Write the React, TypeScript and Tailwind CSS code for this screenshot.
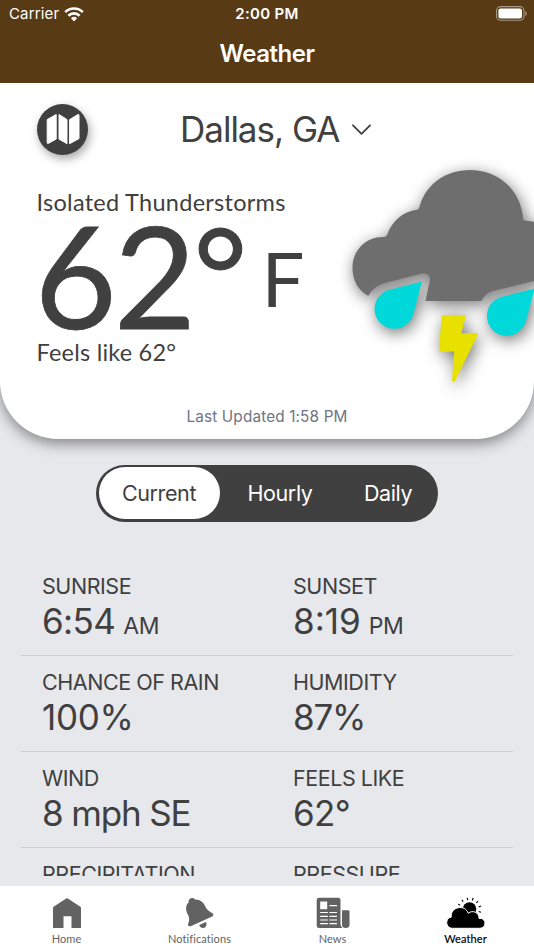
import { useState } from 'react';

const stats = [
  [
    { label: 'SUNRISE', value: '6:54', unit: 'AM', tracking: 'tracking-[-0.6px]' },
    { label: 'SUNSET', value: '8:19', unit: 'PM', tracking: 'tracking-[0px]' },
  ],
  [
    { label: 'CHANCE OF RAIN', value: '100%', tracking: 'tracking-[-0.3px]' },
    { label: 'HUMIDITY', value: '87%', tracking: 'tracking-[-1.2px]' },
  ],
  [
    { label: 'WIND', value: '8 mph SE', tracking: 'tracking-[-1.15px]' },
    { label: 'FEELS LIKE', value: '62°', tracking: 'tracking-[-0.6px]' },
  ],
  [
    { label: 'PRECIPITATION', value: '0.1 in', tracking: 'tracking-[-0.6px]' },
    { label: 'PRESSURE', value: '30.0 in', tracking: 'tracking-[-0.6px]' },
  ],
];

const ranges = [
  { name: 'Current', width: 'w-[121px]' },
  { name: 'Hourly', width: 'w-[121px]' },
  { name: 'Daily', width: 'w-[95px]' },
];

function WifiIcon() {
  return (
    <svg width="20" height="15" viewBox="0 0 20 15" fill="none" stroke="white" strokeWidth="2.6">
      <path d="M1.2 5.1a12.6 12.6 0 0 1 17.6 0" />
      <path d="M4.4 8.7a8 8 0 0 1 11.2 0" />
      <path d="M10 14.4 6.9 11.3a4.5 4.5 0 0 1 6.2 0z" fill="white" stroke="none" />
    </svg>
  );
}

function BatteryIcon() {
  return (
    <svg width="31" height="15" viewBox="0 0 31 15">
      <rect x="0.6" y="0.6" width="27.4" height="13.6" rx="4" fill="none" stroke="#a8998a" strokeWidth="1.1" />
      <rect x="2.4" y="2.4" width="23.6" height="10" rx="2.2" fill="white" />
      <path d="M29.3 5v5c1.9-.8 1.9-4.2 0-5z" fill="#a8998a" />
    </svg>
  );
}

function MapIcon() {
  return (
    <svg width="34" height="32" viewBox="0 0 34 32" fill="white" stroke="white" strokeWidth="1" strokeLinejoin="round">
      <path d="M1.2 6.6 10.2 1.5v24.6l-8 4.3q-1 .3-1-.8z" />
      <path d="M13 1.5 21 6.6v24.1l-8-4.6z" />
      <path d="M23.6 6.6 32 1.5q1-.3 1 .8v23.3l-9.4 5.1z" />
    </svg>
  );
}

function StormIcon() {
  return (
    <svg
      className="absolute right-0 top-[75px] overflow-visible [filter:drop-shadow(2px_4px_8px_rgba(0,0,0,0.55))]"
      width="194"
      height="240"
      viewBox="340 158 194 240"
    >
      <path
        fill="#6e6e6e"
        d="M367.5 295.5C358 290 352.5 280 352.5 268C352.5 250 366 237 383 237Q386 237.5 387.3 234.5C392 221 403 211.5 417 209.8Q419 209.5 419.8 206C426 184 446 170 470 170C498 170 521 190 523 218Q523 220.6 526 220.8C550 222 566 240 566 260V273L534 281L491 291.5Q485 294 481.3 301H425.5L430 280Q430 272.5 423 273.2L383 283.5Q373 287 368.8 295.5z"
      />
      <path fill="#00d8d9" d="M422 281.5 388.5 290A19.8 19.8 0 1 0 413.6 313.5z" />
      <path fill="#00d8d9" d="M534.8 288.5 501 297A19.8 19.8 0 1 0 526 320.5z" />
      <path
        fill="#e8e100"
        stroke="#e8e100"
        strokeWidth="1.6"
        strokeLinejoin="round"
        d="M442.5 316h22.4l-4.6 18.2 17-.5-23 47.2h-1.500l2.3-30.5-15.4.9z"
      />
    </svg>
  );
}

function HomeIcon() {
  return (
    <svg width="30" height="32" viewBox="0 0 30 32" fill="#626262">
      <path d="M15 1 28.4 9.8q.6.4.6 1.2v19.2q0 .9-.9.9H19.5V19.3h-8v11.8H1.9q-.9 0-.9-.9V11q0-.8.6-1.2z" />
    </svg>
  );
}

function BellIcon() {
  return (
    <svg width="30" height="32" viewBox="0 0 30 32" fill="#626262">
      <path d="M3.7 5.3C2.6 1 8.3-.6 10.2 2.6C15.5 2.6 18.6 5.5 20.3 9.5C21.7 13 24.5 14.5 27.6 16.2Q29.2 18.2 27.2 19.5L5.7 29.2Q3 29.6 2.9 27.4C4.6 23.5 4.7 21 2.6 17C.2 12.6.7 8 3.7 5.3z" />
      <path d="M14.2 28 20.8 25.1A3.7 3.7 0 1 1 14.2 28z" />
    </svg>
  );
}

function NewsIcon() {
  return (
    <svg width="34" height="32" viewBox="0 0 34 32">
      <path fill="#626262" d="M3 .7h19.3q2.2 0 2.2 2.2V27q0 2.6 2 4H3Q.7 31 .7 28.5V3Q.7.7 3 .7z" />
      <path fill="#626262" d="M26 13.2h6.3q1.2 0 1.2 1.2V28q0 3-3.7 3T26 28z" />
      <rect x="4.2" y="4.5" width="7" height="7.7" fill="white" />
      <path
        stroke="white"
        strokeWidth="1.2"
        d="M13.5 8.6h7.5M4.2 15.5h7.7M13.4 15.5h7.6M4.2 19.3h7.7M13.4 19.3h7.6M4.2 23h7.7M13.4 23h7.6M4.2 26.7h7.7M13.4 26.7h7.6"
      />
    </svg>
  );
}

function WeatherIcon() {
  return (
    <svg width="40" height="32" viewBox="0 0 40 32">
      <circle cx="23.5" cy="12" r="6.8" />
      <path stroke="black" strokeWidth="1.1" d="M21.8 3.2 21.1.8M26.3 3.5l.8-2.5M30.3 6l1.8-2M32.6 10l2.5-1M32.7 14.5l2.3.7M17.2 4.7 15.9 2.7M14.2 8.3l-2-1.2" />
      <path
        stroke="white"
        strokeWidth="1"
        d="M6.5 31.3C-1 31.3-.9 20.7 5.2 20.2C4.2 9.5 19.5 7 22.2 16.3C26.6 12.5 33 15.5 33 21.4C40.7 20.6 41 31.3 33.5 31.3z"
      />
    </svg>
  );
}

const tabs = [
  { name: 'Home', icon: HomeIcon },
  { name: 'Notifications', icon: BellIcon },
  { name: 'News', icon: NewsIcon },
  { name: 'Weather', icon: WeatherIcon },
];

export default function App() {
  const [range, setRange] = useState('Current');

  return (
    <div className="flex h-[950px] w-[534px] flex-col overflow-hidden bg-[#e7e8ec] font-['Inter',sans-serif] text-[#404040]">
      <header className="relative z-20 h-[83px] shrink-0 bg-[#583a15] text-white">
        <div className="grid h-[28px] grid-cols-3 items-center pl-[9px] pr-[7px]">
          <div className="flex items-center gap-[5px] text-[15px] tracking-[0.15px]">
            Carrier
            <WifiIcon />
          </div>
          <div className="pr-[2px] text-center text-[15px] font-semibold tracking-[0.3px]">2:00 PM</div>
          <div className="flex justify-end pb-[2px]">
            <BatteryIcon />
          </div>
        </div>
        <h1 className="pt-2 text-center text-[24px] font-semibold leading-9 tracking-[-0.5px]">Weather</h1>
      </header>

      <section className="relative z-10 h-[355.5px] shrink-0 rounded-b-[58px] bg-white shadow-[0_5px_14px_rgba(0,0,0,0.42)]">
        <div className="flex h-[92px] items-center pl-[37px]">
          <button className="flex size-[51px] items-center justify-center rounded-full bg-[#404040] shadow-[2px_4px_10px_rgba(0,0,0,0.35)]">
            <MapIcon />
          </button>
          <button className="ml-[92px] flex items-center gap-[13px] whitespace-nowrap text-[35px] tracking-[-1px]">
            Dallas, GA
            <svg width="19" height="11" viewBox="0 0 19 11" fill="none" stroke="#404040" strokeWidth="1.8" strokeLinecap="round" strokeLinejoin="round">
              <path d="M1 1.3 9.5 9.8 18 1.3" />
            </svg>
          </button>
        </div>
        <div className="whitespace-nowrap pl-[36.5px] pt-[13px] font-['Lato',sans-serif]">
          <p className="text-[23.5px] leading-[28px] tracking-[0.28px]">Isolated Thunderstorms</p>
          <div className="-ml-[2px] flex h-[122px] items-start">
            <span className="text-[142px] leading-[116px] tracking-[-3px] [-webkit-text-stroke:0.8px_#404040]">62</span>
            <span className="text-[131px] leading-[113px] [-webkit-text-stroke:1px_#404040]">°</span>
            <span className="ml-[14px] text-[76px] leading-[124px]">F</span>
          </div>
          <p className="text-[23.5px] leading-[28px] tracking-[0.22px]">Feels like 62°</p>
        </div>
        <p className="pt-[39px] text-center text-[15.3px] leading-[24px] tracking-[0.15px] text-[#6f7585]">Last Updated 1:58 PM</p>
        <StormIcon />
      </section>

      <div className="mt-[26px] flex h-[57px] w-[342px] shrink-0 self-center rounded-full bg-[#404040] p-[2.5px]">
        {ranges.map((r) => (
          <button
            key={r.name}
            onClick={() => setRange(r.name)}
            className={`${r.width} shrink-0 rounded-full text-[21.5px] tracking-[-0.4px] ${
              range === r.name ? 'bg-white text-[#404040]' : 'text-white'
            }`}
          >
            {r.name}
          </button>
        ))}
      </div>

      <main className="mx-[21px] mt-[38.5px] h-[316px] shrink-0 overflow-hidden">
        {stats.map((row) => (
          <div key={row[0].label} className="grid h-[96px] grid-cols-[251px_1fr] border-b border-[#cccdd1] pl-[21px]">
            {row.map((s) => (
              <div key={s.label} className="whitespace-nowrap pt-[13px]">
                <p className="text-[21.5px] leading-[27px] tracking-[-0.45px]">{s.label}</p>
                <p className={`text-[35px] leading-[42px] ${s.tracking}`}>
                  {s.value}
                  {s.unit && <span className="ml-2 text-[23px] tracking-[-0.4px]">{s.unit}</span>}
                </p>
              </div>
            ))}
          </div>
        ))}
      </main>

      <nav className="mt-auto grid h-[64px] shrink-0 grid-cols-4 bg-white pr-[2px] font-['Lato',sans-serif]">
        {tabs.map(({ name, icon: Icon }) => (
          <button
            key={name}
            className={`flex flex-col items-center pt-[11px] text-[11px] leading-[20px] tracking-[0.1px] ${
              name === 'Weather' ? 'text-black [-webkit-text-stroke:0.15px_black]' : 'text-[#626262]'
            }`}
          >
            <Icon />
            {name}
          </button>
        ))}
      </nav>
    </div>
  );
}
